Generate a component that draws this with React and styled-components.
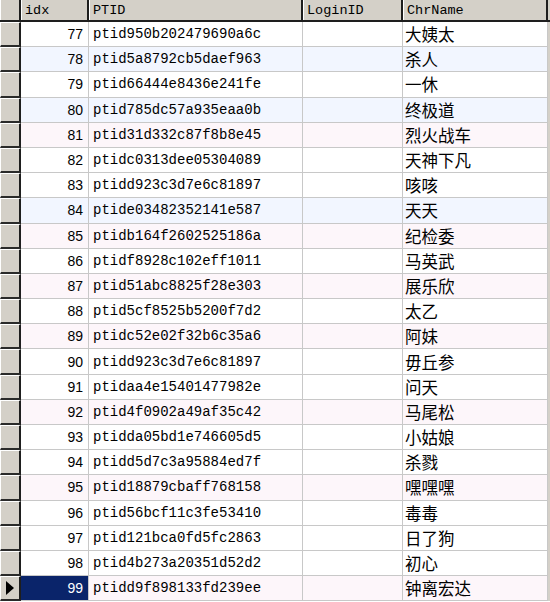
import React from "react";
import styled, { createGlobalStyle, css } from "styled-components";

const rows = [
    [77, "ptid950b202479690a6c", "大姨太"],
    [78, "ptid5a8792cb5daef963", "杀人"],
    [79, "ptid66444e8436e241fe", "一休"],
    [80, "ptid785dc57a935eaa0b", "终极道"],
    [81, "ptid31d332c87f8b8e45", "烈火战车"],
    [82, "ptidc0313dee05304089", "天神下凡"],
    [83, "ptidd923c3d7e6c81897", "咳咳"],
    [84, "ptide03482352141e587", "天天"],
    [85, "ptidb164f2602525186a", "纪检委"],
    [86, "ptidf8928c102eff1011", "马英武"],
    [87, "ptid51abc8825f28e303", "展乐欣"],
    [88, "ptid5cf8525b5200f7d2", "太乙"],
    [89, "ptidc52e02f32b6c35a6", "阿妹"],
    [90, "ptidd923c3d7e6c81897", "毋丘参"],
    [91, "ptidaa4e15401477982e", "问天"],
    [92, "ptid4f0902a49af35c42", "马尾松"],
    [93, "ptidda05bd1e746605d5", "小姑娘"],
    [94, "ptidd5d7c3a95884ed7f", "杀戮"],
    [95, "ptid18879cbaff768158", "嘿嘿嘿"],
    [96, "ptid56bcf11c3fe53410", "毒毒"],
    [97, "ptid121bca0fd5fc2863", "日了狗"],
    [98, "ptid4b273a20351d52d2", "初心"],
    [99, "ptidd9f898133fd239ee", "钟离宏达"],
];

const tints = {
    78: "blue",
    80: "blue",
    81: "pink",
    84: "blue",
    85: "pink",
    87: "pink",
    89: "pink",
    92: "pink",
    95: "pink",
    99: "pink",
};

const App = () => {
    const current = 99;

    return (
        <>
            <GlobalStyle />
            <Grid>
                <HeaderRow>
                    <Corner />
                    <HeadCell>idx</HeadCell>
                    <HeadCell>PTID</HeadCell>
                    <HeadCell>LoginID</HeadCell>
                    <HeadCell>ChrName</HeadCell>
                    <Filler />
                </HeaderRow>
                {rows.map(([idx, ptid, name]) => (
                    <Row key={idx} $tint={tints[idx]}>
                        <Selector>
                            {idx === current && (
                                <svg width="10" height="14" viewBox="0 0 10 14">
                                    <path d="M1 0 L9 7 L1 14 Z" fill="#000" />
                                </svg>
                            )}
                        </Selector>
                        <NumCell $active={idx === current}>{idx}</NumCell>
                        <TextCell>{ptid}</TextCell>
                        <TextCell />
                        <NameCell>{name}</NameCell>
                        <Filler />
                    </Row>
                ))}
            </Grid>
        </>
    );
};

export default App;

const GlobalStyle = createGlobalStyle`
    html, body {
        margin: 0;
        padding: 0;
        background: #ffffff;
        overflow: hidden;
    }
`;

const columns = "21px 68px 214px 100px 145px 2px";

const Grid = styled.div`
    width: 550px;
    height: 602px;
    overflow: hidden;
    background: #ffffff;
`;

const HeaderRow = styled.div`
    display: grid;
    grid-template-columns: ${columns};
    height: 22px;
    background: #d4d0c8;
    border-bottom: 2px solid #1e1e1e;
    box-sizing: border-box;
`;

const Corner = styled.div`
    background: #d4d0c8;
    border-left: 1px solid #ffffff;
    border-right: 2px solid #1e1e1e;
    box-sizing: border-box;
`;

const HeadCell = styled.div`
    display: flex;
    align-items: center;
    padding-left: 3px;
    border-left: 1px solid #ffffff;
    border-right: 2px solid #1e1e1e;
    box-sizing: border-box;
    font-family: "Liberation Mono", monospace;
    font-size: 13.5px;
    color: #000;
    white-space: nowrap;
    overflow: hidden;
`;

const Filler = styled.div`
    background: #d4d0c8;
`;

const Row = styled.div`
    display: grid;
    grid-template-columns: ${columns};
    height: 25.2px;
    background: ${({ $tint }) =>
        $tint === "blue" ? "#f2f6ff" : $tint === "pink" ? "#fdf6fa" : "#ffffff"};
`;

const Selector = styled.div`
    display: flex;
    align-items: center;
    padding-left: 4px;
    background: #d4d0c8;
    border-left: 1px solid #ffffff;
    border-top: 1px solid #ffffff;
    border-right: 2px solid #1e1e1e;
    border-bottom: 2px solid #2a2a2a;
    box-sizing: border-box;
`;

const cellBase = css`
    display: flex;
    align-items: center;
    border-right: 1px solid #c8c8c8;
    border-bottom: 1px solid #c8c8c8;
    box-sizing: border-box;
    color: #000;
    white-space: nowrap;
    overflow: hidden;
`;

const NumCell = styled.div`
    ${cellBase};
    justify-content: flex-end;
    padding-right: 5px;
    font-family: "Liberation Sans", Arial, sans-serif;
    font-size: 14px;

    ${({ $active }) =>
        $active &&
        css`
            background: #0a246a;
            color: #ffffff;
        `}
`;

const TextCell = styled.div`
    ${cellBase};
    padding-left: 4px;
    font-family: "Liberation Mono", monospace;
    font-size: 14px;
`;

const NameCell = styled.div`
    ${cellBase};
    padding-left: 2px;
    font-family: "Noto Sans CJK SC", sans-serif;
    font-size: 16.5px;
`;
